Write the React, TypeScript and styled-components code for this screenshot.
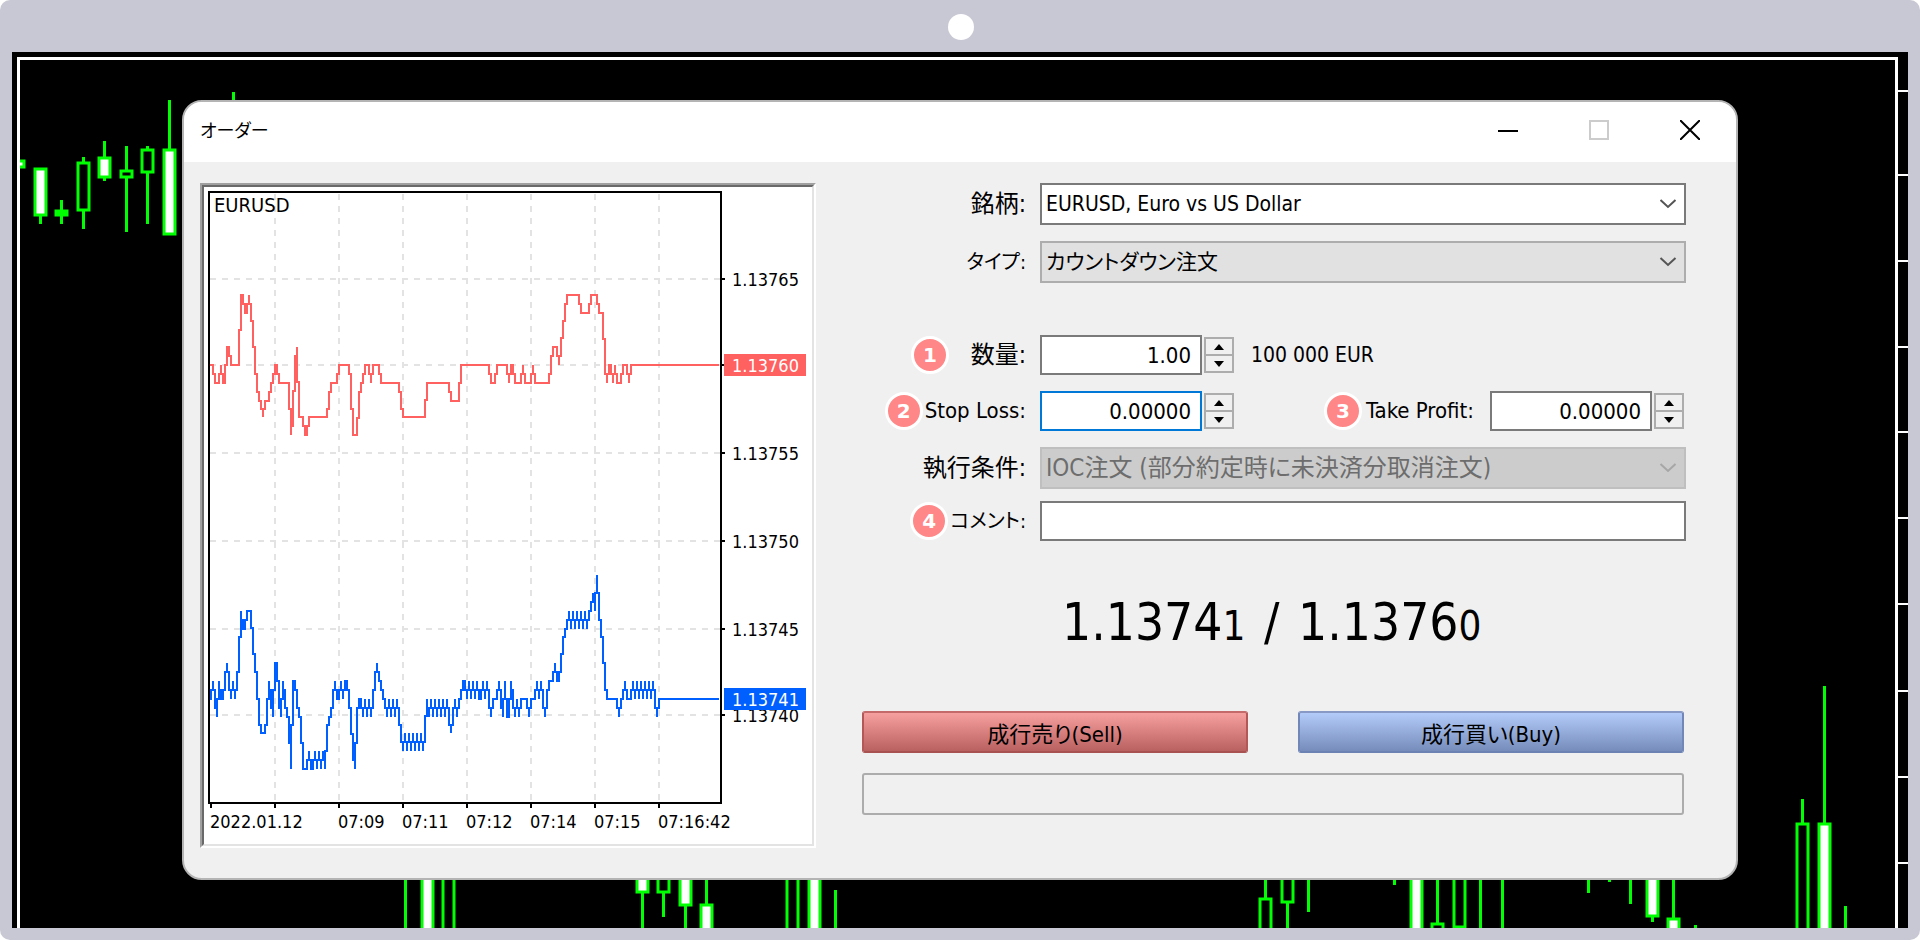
import React from 'react';
import styled, { createGlobalStyle, css } from 'styled-components';

const GlobalStyle = createGlobalStyle`
  *, *::before, *::after { box-sizing: border-box; }
  body { margin: 0; background: #fff; }
  body, button, input, select {
    font-family: 'DejaVu Sans Condensed', 'Noto Sans CJK JP', sans-serif;
    font-feature-settings: 'palt';
    color: #000;
  }
`;

/* ---------- monitor frame ---------- */

const Monitor = styled.main`
  display: flex;
  flex-direction: column;
  min-height: 100vh;
  padding: 0 12px 12px;
  border-radius: 10px;
  background: #c8c8d4;
`;

const Bezel = styled.div`
  display: flex;
  justify-content: center;
  align-items: center;
  height: 52px;
  padding: 2px 0 0 2px;
`;

const Camera = styled.span`
  width: 26px;
  height: 26px;
  border-radius: 50%;
  background: #fff;
`;

const Screen = styled.div`
  position: relative;
  flex: 1;
  padding: 48px 170px;
  background: #000;
  overflow: hidden;
`;

const Backdrop = styled.svg`
  position: absolute;
  inset: 0;
  width: 100%;
  height: 100%;
`;

/* ---------- order window ---------- */

const Dialog = styled.section`
  position: relative;
  border: 2px solid #b4b4b4;
  border-radius: 20px;
  background: #f0f0f0;
  overflow: hidden;
`;

const TitleBar = styled.header`
  display: flex;
  justify-content: space-between;
  height: 60px;
  padding-left: 16px;
  background: #fff;
`;

const Title = styled.h1`
  margin: 0;
  font-size: 18px;
  font-weight: 400;
  line-height: 58px;
`;

const WindowButtons = styled.div`
  display: flex;
  padding-right: 1px;
`;

const WindowButton = styled.button`
  display: flex;
  justify-content: center;
  align-items: center;
  width: 91px;
  height: 56px;
  padding: 0;
  border: 0;
  background: none;
`;

const Body = styled.div`
  display: grid;
  grid-template-columns: 616fr 824fr;
  column-gap: 46px;
  align-items: start;
  padding: 21px 50px 30px 16px;
`;

const ChartPanel = styled.div`
  border: 2px solid;
  border-color: #a0a0a0 #fff #fff #a0a0a0;
`;

const ChartInner = styled.div`
  border: 2px solid;
  border-color: #696969 #e3e3e3 #e3e3e3 #696969;
  background: #fff;
`;

const TickSvg = styled.svg`
  display: block;
  width: 100%;
  height: auto;
  font-size: 18px;
`;

/* ---------- form ---------- */

const Form = styled.form`
  display: flex;
  flex-direction: column;
  gap: 16px;
`;

const FieldRow = styled.div<{ $before?: number }>`
  display: flex;
  align-items: center;
  margin-top: ${(p) => p.$before ?? 0}px;
`;

const LabelCell = styled.div`
  display: flex;
  justify-content: flex-end;
  align-items: center;
  gap: 2px;
  width: 178px;
  padding-right: 14px;
`;

const labelSizes = { kanji: 24, kana: 20, latin: 22 };

const Label = styled.label<{ $script: keyof typeof labelSizes }>`
  min-width: 75px;
  font-size: ${(p) => labelSizes[p.$script]}px;
  line-height: 36px;
  text-align: right;
  white-space: nowrap;
`;

const Badge = styled.span`
  flex: none;
  width: 38px;
  height: 38px;
  border: 3px solid #fff;
  border-radius: 50%;
  background: #ff8787;
  color: #fff;
  font: 700 20px/32px 'DejaVu Sans', sans-serif;
  text-align: center;
`;

const SelectBox = styled.div`
  position: relative;
  flex: 1;
`;

const tones = {
  plain: css`border-color: #7a7a7a; background: #fff; font-size: 21px;`,
  grey: css`border-color: #adadad; background: #e1e1e1; font-size: 21px;`,
  off: css`border-color: #bfbfbf; background: #ccc; color: #6d6d6d; font-size: 24px;`,
};

const Select = styled.select<{ $tone: keyof typeof tones }>`
  display: block;
  width: 100%;
  height: 42px;
  padding: 0 40px 0 4px;
  border: 2px solid;
  border-radius: 0;
  appearance: none;
  opacity: 1;
  outline: none;
  ${(p) => tones[p.$tone]}
`;

const Chevron = styled.svg`
  position: absolute;
  top: 14px;
  right: 9px;
  pointer-events: none;
`;

const TextInput = styled.input<{ $active?: boolean }>`
  flex: 1;
  min-width: 0;
  height: 40px;
  padding: 0 9px;
  border: 2px solid ${(p) => (p.$active ? '#0078d7' : '#7a7a7a')};
  border-radius: 0;
  background: #fff;
  font-size: 22px;
  outline: none;
`;

const NumberInput = styled(TextInput)`
  flex: none;
  width: 162px;
  text-align: right;
`;

const SpinBox = styled.div`
  display: flex;
  flex-direction: column;
  gap: 2px;
  width: 30px;
  height: 36px;
  margin-left: 2px;
  border: 2px solid #adadad;
  background: #adadad;
`;

const SpinButton = styled.button`
  display: flex;
  justify-content: center;
  align-items: center;
  flex: 1;
  padding: 0;
  border: 0;
  background: #f0f0f0;
`;

const Units = styled.span`
  margin-left: 17px;
  font-size: 21px;
`;

const RightGroup = styled.div`
  display: flex;
  align-items: center;
  gap: 4px;
  margin-left: auto;
  padding-right: 16px;
`;

const EndSpace = styled.span`
  width: 2px;
`;

const Quote = styled.output`
  display: block;
  margin: 26px 0 0 200px;
  font-size: 51px;
  line-height: 80px;
  white-space: nowrap;

  small {
    font-size: 40px;
    line-height: 1;
  }
`;

const Slash = styled.span`
  margin: 0 4px;
`;

const Actions = styled.div`
  display: grid;
  grid-template-columns: 1fr 1fr;
  gap: 50px;
  padding: 32px 2px 0 0;
`;

const TradeButton = styled.button<{ $side: 'sell' | 'buy' }>`
  height: 42px;
  padding: 0;
  border: 2px solid;
  border-radius: 3px;
  font-size: 22px;
  ${(p) =>
    p.$side === 'sell'
      ? css`border-color: #c46a6a #b35757 #a95252; background: linear-gradient(#f7a0a0, #b96060);`
      : css`border-color: #8799c4 #7087b8 #6b82b2; background: linear-gradient(#b3cbf9, #768dbb);`}
`;

const StatusBox = styled.div`
  height: 42px;
  margin: 4px 2px 0 0;
  border: 2px solid #acacac;
  border-radius: 3px;
`;

/* ---------- background candles ---------- */

type Candle = { x: number; high: number; low: number; top?: number; bottom?: number; fill?: string };

const WHITE = '#fff';
const GREEN = '#00ff00';

const candles: Candle[] = [
  { x: 18, high: 160, low: 168, top: 160, bottom: 168, fill: WHITE },
  { x: 40, high: 168, low: 224, top: 168, bottom: 216, fill: WHITE },
  { x: 61, high: 200, low: 224, top: 210, bottom: 216, fill: GREEN },
  { x: 83, high: 157, low: 229, top: 162, bottom: 211 },
  { x: 104, high: 141, low: 181, top: 157, bottom: 178, fill: WHITE },
  { x: 126, high: 146, low: 232, top: 170, bottom: 178 },
  { x: 147, high: 146, low: 224, top: 149, bottom: 173 },
  { x: 169, high: 100, low: 235, top: 149, bottom: 235, fill: WHITE },
  { x: 233, high: 92, low: 240 },
  { x: 405, high: 860, low: 940 },
  { x: 427, high: 860, low: 940, top: 850, bottom: 950, fill: WHITE },
  { x: 448, high: 860, low: 860, top: 850, bottom: 950 },
  { x: 642, high: 860, low: 940, top: 850, bottom: 893, fill: WHITE },
  { x: 663, high: 893, low: 917, top: 850, bottom: 893 },
  { x: 685, high: 860, low: 940, top: 850, bottom: 906, fill: WHITE },
  { x: 706, high: 860, low: 940, top: 904, bottom: 950, fill: WHITE },
  { x: 792, high: 860, low: 860, top: 850, bottom: 950 },
  { x: 814, high: 860, low: 940, top: 850, bottom: 950, fill: WHITE },
  { x: 835, high: 890, low: 940 },
  { x: 1265, high: 860, low: 898, top: 898, bottom: 950 },
  { x: 1287, high: 903, low: 940, top: 850, bottom: 903 },
  { x: 1308, high: 860, low: 912 },
  { x: 1394, high: 860, low: 885 },
  { x: 1416, high: 860, low: 940, top: 850, bottom: 950, fill: WHITE },
  { x: 1437, high: 860, low: 923, top: 923, bottom: 950 },
  { x: 1459, high: 927, low: 927, top: 850, bottom: 928 },
  { x: 1480, high: 860, low: 940 },
  { x: 1502, high: 860, low: 940 },
  { x: 1588, high: 860, low: 893 },
  { x: 1609, high: 860, low: 882 },
  { x: 1630, high: 860, low: 904 },
  { x: 1652, high: 860, low: 922, top: 850, bottom: 917, fill: WHITE },
  { x: 1673, high: 860, low: 940, top: 918, bottom: 950, fill: WHITE },
  { x: 1695, high: 925, low: 940 },
  { x: 1802, high: 799, low: 823, top: 823, bottom: 950 },
  { x: 1824, high: 686, low: 940, top: 823, bottom: 950, fill: WHITE },
  { x: 1845, high: 906, low: 940 },
];

const scaleTicks = [90, 174, 260, 346, 431, 517, 603, 690, 776, 862];

function MarketBackdrop() {
  return (
    <Backdrop viewBox="12 52 1896 876" preserveAspectRatio="xMidYMid slice" aria-hidden="true">
      <clipPath id="plot">
        <rect x="20" y="60" width="1875" height="870" />
      </clipPath>
      <g clipPath="url(#plot)" stroke={GREEN} strokeWidth="3">
        {candles.map((c) => (
          <g key={c.x}>
            <line x1={c.x + 0.5} x2={c.x + 0.5} y1={c.high} y2={c.low} />
            {c.top !== undefined && c.bottom !== undefined && (
              <rect x={c.x - 5} y={c.top + 1} width="11" height={c.bottom - c.top - 2} fill={c.fill ?? '#000'} />
            )}
          </g>
        ))}
      </g>
      <path d="M18.5 940V58.5H1896.5V940" fill="none" stroke="#fff" strokeWidth="3" />
      {scaleTicks.map((y) => (
        <rect key={y} x="1898" y={y} width="10" height="2" fill="#fff" />
      ))}
    </Backdrop>
  );
}

/* ---------- tick chart ---------- */

/* Each run is [pattern, repeat]; a pattern holds one hex digit of pips above the base per tick. */
type Run = [string, number];

const askRuns: Run[] = [
  ['5', 2], ['4', 3], ['54466', 1], ['5', 5], ['9988987543323334', 1], ['4', 1], ['55', 1],
  ['4', 6], ['125622211', 1], ['2', 10], ['3', 1], ['4', 4], ['5', 6], ['4111344', 1],
  ['55545555', 1], ['4', 10], ['3', 1], ['2', 12], ['4', 12], ['3', 5], ['5', 15], ['4', 3],
  ['5', 6], ['455', 1], ['4', 4], ['5', 1], ['4', 4], ['5', 1], ['4', 8], ['56665678', 1],
  ['9', 7], ['8', 5], ['9', 4], ['8', 3], ['54554544455', 1], ['54', 1], ['5', 45],
];

const bidRuns: Run[] = [
  ['5654655676565', 1], ['67a99aaa8764333465477546', 1], ['544166544', 1],
  ['1112112121213', 1], ['445655656654214', 1], ['554', 1], ['54', 2], ['5676655', 1],
  ['45', 3], ['43', 1], ['23', 6], ['54', 6], ['34545566', 1], ['56', 3], ['556565455565464465454', 1],
  ['5', 4], ['4', 1], ['5', 3], ['65', 2], ['4566676678', 1], ['99', 1], ['a9', 5],
  ['aabaca986', 1], ['5', 6], ['45', 1], ['56555', 1], ['65', 6], ['4', 1], ['5', 31],
];

const ASK_BASE = 55;
const BID_BASE = 36;

const priceY = (pips: number) => 365 + 2 * Math.round((60 - pips) * 8.78);

function tickPath(runs: Run[], base: number) {
  const ticks = runs
    .map(([pattern, repeat]) => pattern.repeat(repeat))
    .join('')
    .slice(0, 255)
    .split('')
    .map((d) => priceY(base + parseInt(d, 16)));
  return ticks.reduce((path, y, i) => {
    const x = 211 + i * 2;
    if (i === 0) return `M210 ${y}H${x}`;
    return `${path}V${(ticks[i - 1] + y) / 2}H${x}V${y}`;
  }, '');
}

const timeGrid = [275, 339, 403, 467, 531, 595, 659];
const priceGrid = [
  { y: 279, label: '1.13765' },
  { y: 365, label: '' },
  { y: 453, label: '1.13755' },
  { y: 541, label: '1.13750' },
  { y: 629, label: '1.13745' },
  { y: 715, label: '1.13740' },
];
const timeLabels = [
  { x: 210, label: '2022.01.12' },
  { x: 338, label: '07:09' },
  { x: 402, label: '07:11' },
  { x: 466, label: '07:12' },
  { x: 530, label: '07:14' },
  { x: 594, label: '07:15' },
  { x: 658, label: '07:16:42' },
];

function PriceTag({ y, color, label }: { y: number; color: string; label: string }) {
  return (
    <g>
      <rect x="724" y={y - 11} width="82" height="22" fill={color} />
      <text x="732" y={y + 7} fill="#fff">{label}</text>
    </g>
  );
}

function TickChart() {
  return (
    <TickSvg viewBox="204 187 608 657" role="img" aria-label="EURUSD">
      <g stroke="#e3e3e3" strokeWidth="2" strokeDasharray="6 6">
        {timeGrid.map((x) => (
          <line key={x} x1={x} x2={x} y1="194" y2="802" />
        ))}
        {priceGrid.map(({ y }) => (
          <line key={y} x1="210" x2="720" y1={y} y2={y} />
        ))}
      </g>
      <g fill="none" strokeWidth="2">
        <path d={tickPath(askRuns, ASK_BASE)} stroke="#ff6060" />
        <path d={tickPath(bidRuns, BID_BASE)} stroke="#0060ff" />
        <path d="M209 192H721V803H209Z" stroke="#000" />
      </g>
      {priceGrid.map(({ y, label }) => (
        <g key={y}>
          <rect x="722" y={y - 1} width="3" height="2" />
          <text x="732" y={y + 7}>{label}</text>
        </g>
      ))}
      {[211, ...timeGrid].map((x) => (
        <rect key={x} x={x - 1} y="804" width="2" height="4" />
      ))}
      {timeLabels.map(({ x, label }) => (
        <text key={x} x={x} y="828">{label}</text>
      ))}
      <text x="214" y="212" fontSize="20">EURUSD</text>
      <PriceTag y={365} color="#ff6060" label="1.13760" />
      <PriceTag y={699} color="#0060ff" label="1.13741" />
    </TickSvg>
  );
}

/* ---------- small parts ---------- */

function Dropdown({ id, value, tone }: { id: string; value: string; tone: keyof typeof tones }) {
  return (
    <SelectBox>
      <Select id={id} $tone={tone} disabled={tone === 'off'}>
        <option>{value}</option>
      </Select>
      <Chevron width="18" height="14" viewBox="0 0 18 14">
        <path d="M1.500 3L9 10L16.500 3" fill="none" stroke={tone === 'off' ? '#a6a6a6' : '#555'} strokeWidth="2" />
      </Chevron>
    </SelectBox>
  );
}

function Spinner({ name }: { name: string }) {
  return (
    <SpinBox>
      <SpinButton type="button" aria-label={`${name} +`}>
        <svg width="10" height="6" viewBox="0 0 10 6"><path d="M5 0L10 6H0Z" /></svg>
      </SpinButton>
      <SpinButton type="button" aria-label={`${name} -`}>
        <svg width="10" height="6" viewBox="0 0 10 6"><path d="M5 6L10 0H0Z" /></svg>
      </SpinButton>
    </SpinBox>
  );
}

export default function App() {
  return (
    <>
      <GlobalStyle />
      <Monitor>
        <Bezel><Camera /></Bezel>
        <Screen>
          <MarketBackdrop />
          <Dialog>
            <TitleBar>
              <Title>オーダー</Title>
              <WindowButtons>
                <WindowButton type="button" aria-label="最小化">
                  <svg width="20" height="20" viewBox="0 0 20 20"><path d="M0 11H20" stroke="#000" strokeWidth="2" /></svg>
                </WindowButton>
                <WindowButton type="button" aria-label="最大化" disabled>
                  <svg width="20" height="20" viewBox="0 0 20 20"><path d="M1 1H19V19H1Z" fill="none" stroke="#ccc" strokeWidth="2" /></svg>
                </WindowButton>
                <WindowButton type="button" aria-label="閉じる">
                  <svg width="20" height="20" viewBox="0 0 20 20"><path d="M0 0L20 20M20 0L0 20" stroke="#000" strokeWidth="2" /></svg>
                </WindowButton>
              </WindowButtons>
            </TitleBar>
            <Body>
              <ChartPanel>
                <ChartInner><TickChart /></ChartInner>
              </ChartPanel>
              <Form onSubmit={(e) => e.preventDefault()}>
                <FieldRow>
                  <LabelCell><Label $script="kanji" htmlFor="symbol">銘柄:</Label></LabelCell>
                  <Dropdown id="symbol" value="EURUSD, Euro vs US Dollar" tone="plain" />
                </FieldRow>
                <FieldRow>
                  <LabelCell><Label $script="kana" htmlFor="type">タイプ:</Label></LabelCell>
                  <Dropdown id="type" value="カウントダウン注文" tone="grey" />
                </FieldRow>
                <FieldRow $before={36}>
                  <LabelCell>
                    <Badge>1</Badge>
                    <Label $script="kanji" htmlFor="volume">数量:</Label>
                  </LabelCell>
                  <NumberInput id="volume" defaultValue="1.00" />
                  <Spinner name="数量" />
                  <Units>100 000 EUR</Units>
                </FieldRow>
                <FieldRow>
                  <LabelCell>
                    <Badge>2</Badge>
                    <Label $script="latin" htmlFor="stop-loss">Stop Loss:</Label>
                  </LabelCell>
                  <NumberInput id="stop-loss" defaultValue="0.00000" $active />
                  <Spinner name="Stop Loss" />
                  <RightGroup>
                    <Badge>3</Badge>
                    <Label $script="latin" htmlFor="take-profit">Take Profit:</Label>
                  </RightGroup>
                  <NumberInput id="take-profit" defaultValue="0.00000" />
                  <Spinner name="Take Profit" />
                  <EndSpace />
                </FieldRow>
                <FieldRow>
                  <LabelCell><Label $script="kanji" htmlFor="filling">執行条件:</Label></LabelCell>
                  <Dropdown id="filling" value="IOC注文 (部分約定時に未決済分取消注文)" tone="off" />
                </FieldRow>
                <FieldRow $before={-4}>
                  <LabelCell>
                    <Badge>4</Badge>
                    <Label $script="kana" htmlFor="comment">コメント:</Label>
                  </LabelCell>
                  <TextInput id="comment" />
                </FieldRow>
                <Quote>
                  1.1374<small>1</small> <Slash>/</Slash> 1.1376<small>0</small>
                </Quote>
                <Actions>
                  <TradeButton type="button" $side="sell">成行売り(Sell)</TradeButton>
                  <TradeButton type="button" $side="buy">成行買い(Buy)</TradeButton>
                </Actions>
                <StatusBox />
              </Form>
            </Body>
          </Dialog>
        </Screen>
      </Monitor>
    </>
  );
}
